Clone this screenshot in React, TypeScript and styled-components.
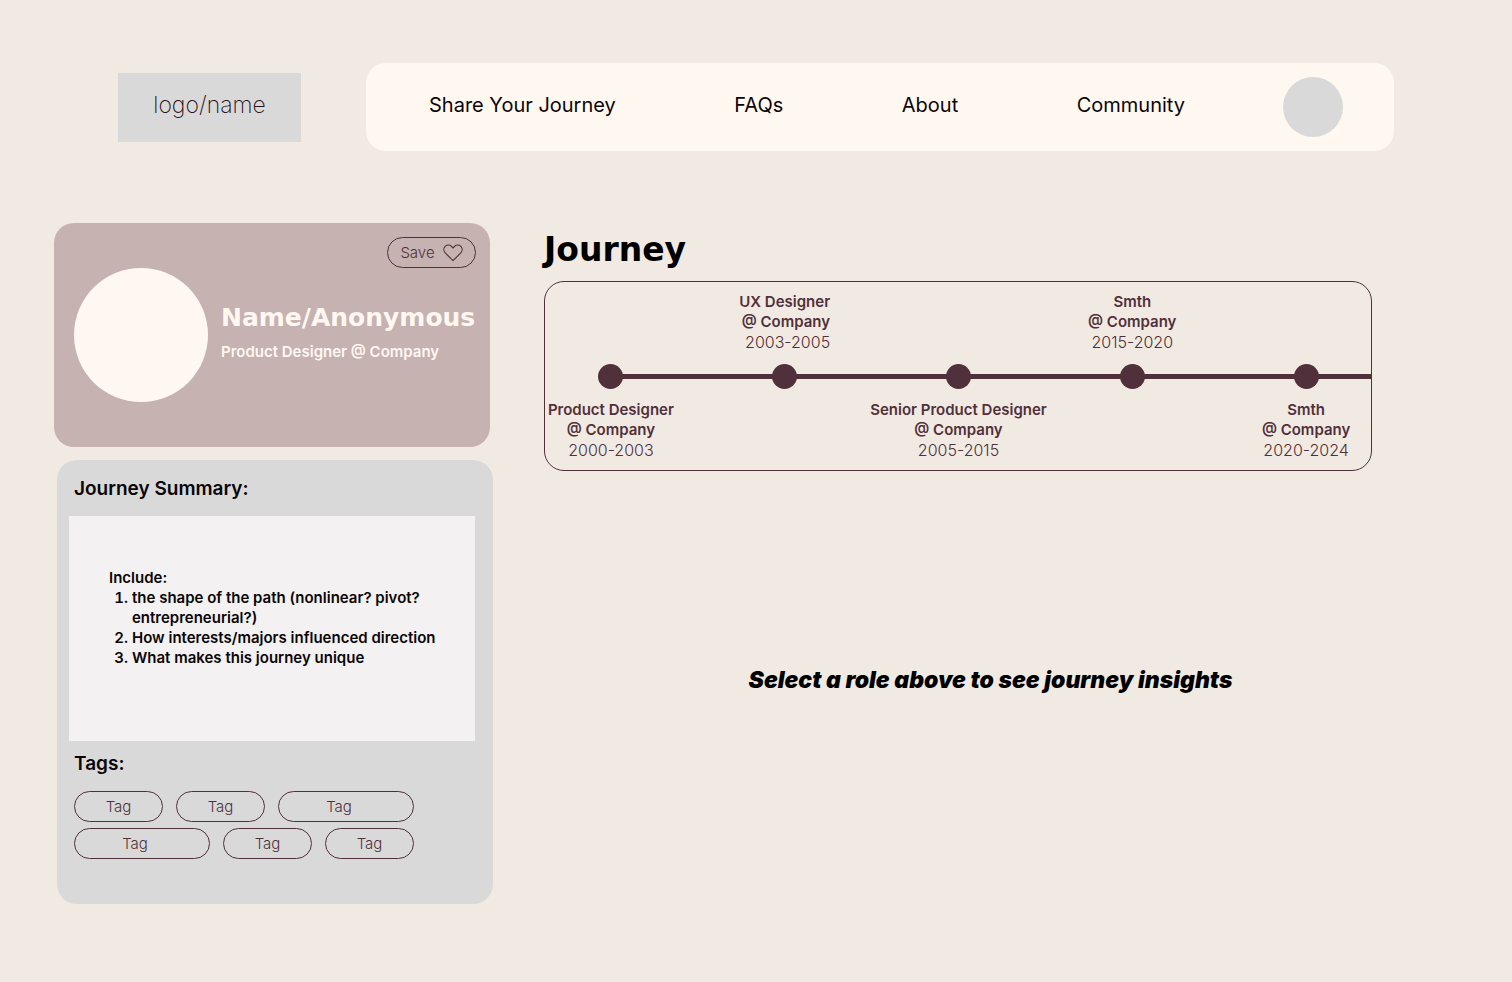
import React from "react";
import styled, { createGlobalStyle } from "styled-components";

const plum = "#50303a";
const cream = "#fff8f1";
const grey = "#d9d9d9";
const wide = '"DejaVu Sans", Verdana, sans-serif';

const GlobalStyle = createGlobalStyle`
  *, *::before, *::after { box-sizing: border-box; }
  body {
    margin: 0;
    background: #f1eae3;
    color: #0a0506;
    font-family: Inter, "Liberation Sans", sans-serif;
    font-size: 15px;
    line-height: 20px;
  }
  h1, h2, p, ol, ul { margin: 0; padding: 0; }
  ul { list-style: none; }
  button { font: inherit; color: inherit; background: none; border: 0; padding: 0; cursor: pointer; }
`;

const Page = styled.div`
  min-height: 100vh;
  padding-bottom: 78px;
`;

const Header = styled.header`
  display: flex;
  align-items: center;
  gap: 65px;
  padding: 63px 118px 0;
`;

const Logo = styled.a`
  display: flex;
  align-items: center;
  justify-content: center;
  flex: none;
  width: 183px;
  height: 69px;
  padding-bottom: 4px;
  background: ${grey};
  color: #2a1018;
  font-size: 23px;
  font-weight: 200;
  text-decoration: none;
`;

const Nav = styled.nav`
  display: flex;
  align-items: center;
  flex: 1;
  gap: 98px;
  min-height: 88px;
  padding: 0 51px 0 63px;
  border-radius: 20px;
  background: ${cream};
`;

const NavList = styled.ul`
  display: flex;
  flex: 1;
  justify-content: space-between;
  padding-bottom: 4px;
`;

const NavLink = styled.a`
  color: inherit;
  font-size: 20px;
  line-height: 24px;
  text-decoration: none;
  white-space: nowrap;
`;

const Account = styled.button`
  flex: none;
  width: 60px;
  height: 60px;
  border-radius: 50%;
  background: ${grey};
`;

const Main = styled.main`
  display: grid;
  grid-template-columns: 439px minmax(0, 1fr);
  gap: 51px;
  padding: 72px 75px 0 54px;
`;

const Sidebar = styled.div`
  display: flex;
  flex-direction: column;
  gap: 13px;
`;

const ProfileCard = styled.section`
  display: flex;
  flex-direction: column;
  width: 436px;
  min-height: 224px;
  padding: 14px 14px 45px 20px;
  border-radius: 20px;
  background: #c6b2b1;
`;

const SaveButton = styled.button`
  display: flex;
  align-items: center;
  align-self: flex-end;
  justify-content: center;
  gap: 8px;
  width: 89px;
  height: 31px;
  border: 1px solid ${plum};
  border-radius: 16px;
  color: ${plum};
  font-weight: 300;
`;

const ProfileRow = styled.div`
  display: flex;
  align-items: center;
  gap: 13px;
`;

const Portrait = styled.div`
  flex: none;
  width: 134px;
  height: 134px;
  border-radius: 50%;
  background: ${cream};
`;

const Identity = styled.div`
  display: flex;
  flex-direction: column;
  gap: 10px;
  padding-bottom: 4px;
  color: ${cream};
  font-weight: 600;
  white-space: nowrap;
`;

const Name = styled.h1`
  font: 700 25px/28px ${wide};
`;

const SummaryCard = styled.section`
  align-self: flex-end;
  width: 436px;
  min-height: 444px;
  padding: 16px 18px 45px 12px;
  border-radius: 20px;
  background: ${grey};
`;

const CardTitle = styled.h2`
  padding-left: 5px;
  font-size: 19px;
  line-height: 26px;
  font-weight: 600;
`;

const SummaryBox = styled.div`
  min-height: 225px;
  margin: 14px 0 10px;
  padding: 52px 30px 52px 40px;
  background: #f3f1f2;
  font-weight: 600;
`;

const SummaryList = styled.ol`
  padding-left: 23px;
`;

const Tags = styled.ul`
  display: flex;
  flex-wrap: wrap;
  gap: 6px 13px;
  width: 345px;
  margin-top: 14px;
  padding-left: 5px;
`;

const Tag = styled.li<{ $long?: boolean }>`
  display: flex;
  align-items: center;
  justify-content: center;
  width: ${(p) => (p.$long ? 136 : 89)}px;
  height: 31px;
  padding-right: ${(p) => (p.$long ? 14 : 0)}px;
  border: 1px solid ${plum};
  border-radius: 16px;
  color: ${plum};
  font-weight: 300;
`;

const JourneySection = styled.section`
  display: flex;
  flex-direction: column;
  padding-top: 10px;
`;

const JourneyTitle = styled.h2`
  font: 700 33px/34px ${wide};
  color: #000;
`;

const Timeline = styled.div`
  margin: 14px 65px 0 0;
  padding: 10px 0;
  overflow: hidden;
  border: 1px solid ${plum};
  border-radius: 20px;
`;

const Stops = styled.ul`
  display: grid;
  grid-template-columns: repeat(5, minmax(0, 1fr));
  margin: 0 -22px 0 -21px;
`;

const Stop = styled.button`
  display: grid;
  grid-template-columns: minmax(0, 1fr);
  grid-template-rows: 61px 25px 60px;
  row-gap: 11px;
  justify-items: center;
  width: 100%;
  color: ${plum};
  white-space: nowrap;
`;

const Dot = styled.span`
  position: relative;
  grid-row: 2;
  justify-self: stretch;
  display: flex;
  justify-content: center;

  &::before {
    content: "";
    width: 25px;
    height: 25px;
    border-radius: 50%;
    background: ${plum};
  }
`;

const Rail = styled.span`
  position: absolute;
  top: 10px;
  left: 50%;
  width: 100%;
  height: 5px;
  background: ${plum};
`;

const StopLabel = styled.span<{ $below: boolean; $align: string }>`
  display: flex;
  flex-direction: column;
  grid-row: ${(p) => (p.$below ? 3 : 1)};
  align-items: ${(p) => p.$align};
  font-weight: 600;
`;

const Years = styled.span`
  font-size: 16px;
  font-weight: 300;
`;

const Hint = styled.p`
  margin-top: 195px;
  font-size: 23px;
  line-height: 28px;
  font-style: italic;
  font-weight: 900;
  color: #000;
  text-align: center;
`;

const HeartIcon = () => (
  <svg width="20" height="18" viewBox="0 0 20 18" fill="none" stroke={plum} strokeWidth="1.1" strokeLinejoin="round" aria-hidden="true">
    <path d="M10 16.6 2.2 8.9C.4 7 .4 4.200 2.100 2.400 3.900.700 6.700.700 8.500 2.400L10 4l1.500-1.600c1.800-1.700 4.600-1.700 6.400 0 1.700 1.800 1.700 4.600-.1 6.500Z" />
  </svg>
);

const links = ["Share Your Journey", "FAQs", "About", "Community"];

const stops = [
  { role: "Product Designer", years: "2000-2003" },
  { role: "UX Designer", years: "2003-2005", align: "flex-end" },
  { role: "Senior Product Designer", years: "2005-2015" },
  { role: "Smth", years: "2015-2020" },
  { role: "Smth", years: "2020-2024" },
];

const tags = [false, false, true, true, false, false];

export default function App() {
  return (
    <Page>
      <GlobalStyle />
      <Header>
        <Logo href="#">logo/name</Logo>
        <Nav>
          <NavList>
            {links.map((link) => (
              <li key={link}>
                <NavLink href="#">{link}</NavLink>
              </li>
            ))}
          </NavList>
          <Account aria-label="Account" />
        </Nav>
      </Header>
      <Main>
        <Sidebar>
          <ProfileCard>
            <SaveButton>
              Save
              <HeartIcon />
            </SaveButton>
            <ProfileRow>
              <Portrait />
              <Identity>
                <Name>Name/Anonymous</Name>
                <p>Product Designer @ Company</p>
              </Identity>
            </ProfileRow>
          </ProfileCard>
          <SummaryCard>
            <CardTitle>Journey Summary:</CardTitle>
            <SummaryBox>
              <p>Include:</p>
              <SummaryList>
                <li>the shape of the path (nonlinear? pivot? entrepreneurial?)</li>
                <li>How interests/majors influenced direction</li>
                <li>What makes this journey unique</li>
              </SummaryList>
            </SummaryBox>
            <CardTitle>Tags:</CardTitle>
            <Tags>
              {tags.map((long, i) => (
                <Tag key={i} $long={long}>Tag</Tag>
              ))}
            </Tags>
          </SummaryCard>
        </Sidebar>
        <JourneySection>
          <JourneyTitle>Journey</JourneyTitle>
          <Timeline>
            <Stops>
              {stops.map((stop, i) => (
                <li key={stop.years}>
                  <Stop>
                    <StopLabel $below={i % 2 === 0} $align={stop.align ?? "center"}>
                      <span>{stop.role}</span>
                      <span>@ Company</span>
                      <Years>{stop.years}</Years>
                    </StopLabel>
                    <Dot>
                      <Rail />
                    </Dot>
                  </Stop>
                </li>
              ))}
            </Stops>
          </Timeline>
          <Hint>Select a role above to see journey insights</Hint>
        </JourneySection>
      </Main>
    </Page>
  );
}
